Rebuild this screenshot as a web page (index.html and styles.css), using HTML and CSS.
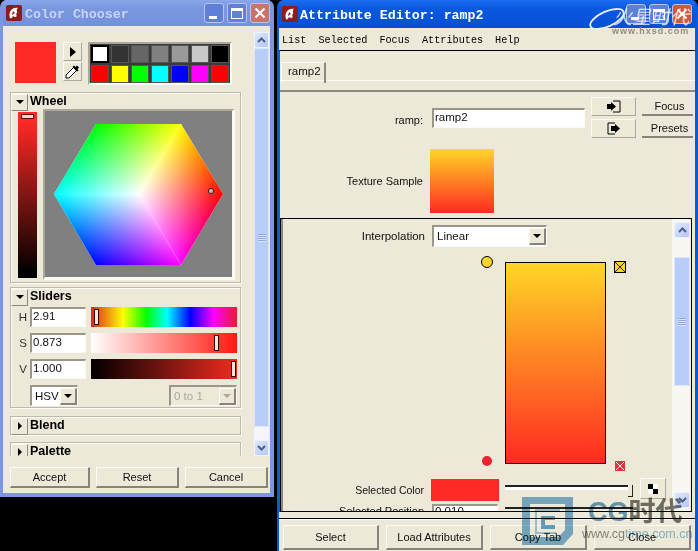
FILE: index.html
```html
<!DOCTYPE html>
<html lang="en">
<head>
  <meta charset="UTF-8" />
  <title>Color Chooser and Attribute Editor</title>
  <link rel="stylesheet" href="styles.css">
</head>
<body>

<svg class="defs" width="0" height="0">
  <defs>
    <linearGradient id="r1" gradientUnits="userSpaceOnUse" x1="94" y1="83" x2="156" y2="120"><stop offset="0" stop-color="#fff"/><stop offset="1" stop-color="#f0f"/></linearGradient>
    <linearGradient id="r2" gradientUnits="userSpaceOnUse" x1="94" y1="83" x2="156" y2="46.5"><stop offset="0" stop-color="#fff"/><stop offset="1" stop-color="#ff0"/></linearGradient>
    <linearGradient id="g1" gradientUnits="userSpaceOnUse" x1="94" y1="83" x2="31.6" y2="45.6"><stop offset="0" stop-color="#fff"/><stop offset="1" stop-color="#0ff"/></linearGradient>
    <linearGradient id="g2" gradientUnits="userSpaceOnUse" x1="94" y1="83" x2="94" y2="13"><stop offset="0" stop-color="#fff"/><stop offset="1" stop-color="#ff0"/></linearGradient>
    <linearGradient id="b1" gradientUnits="userSpaceOnUse" x1="94" y1="83" x2="31" y2="120"><stop offset="0" stop-color="#fff"/><stop offset="1" stop-color="#0ff"/></linearGradient>
    <linearGradient id="b2" gradientUnits="userSpaceOnUse" x1="94" y1="83" x2="94" y2="154"><stop offset="0" stop-color="#fff"/><stop offset="1" stop-color="#f0f"/></linearGradient>
  </defs>
</svg>

<!-- color chooser window -->
<div class="window chooser">
  <div class="titlebar">
    <svg class="app-icon" viewBox="0 0 16 16"><rect width="16" height="16" rx="2" fill="#8c1c20"/><path d="M4 13 C2 7 6 2 12 3 C9 5 13 7 10 9 C12 12 9 13 7 11 C6 13 5 14 4 13Z" fill="#fff"/><path d="M7 6 L9 8 L6 10Z" fill="#8c1c20"/></svg>
    <span class="title-text">Color Chooser</span>
    <div class="title-btns">
      <span class="tbtn"><i class="glyph-min"></i></span>
      <span class="tbtn"><i class="glyph-max"></i></span>
      <span class="tbtn tbtn-close"><svg width="12" height="12" viewBox="0 0 12 12"><path d="M1.5 1.5 L10.5 10.5 M10.5 1.5 L1.5 10.5" stroke="#fff" stroke-width="2"/></svg></span>
    </div>
  </div>
  <div class="client">
    <div class="chooser-main">
      <div class="chooser-panel">
        <div class="picker-top">
          <div class="current-color"></div>
          <div class="picker-tools">
            <span class="raised tool"><i class="arrow-right"></i></span>
            <span class="raised tool">
              <svg width="15" height="15" viewBox="0 0 15 15"><path d="M8.5 3.5 L11.5 6.5 L4 14 L1 14 L1 11Z" fill="#fff" stroke="#000"/><path d="M9 1.5 L10.5 3 L12 1.5 L14 3.5 L12.5 5 L13.5 6.5 L12 7.5 L7.5 3Z" fill="#000"/></svg>
            </span>
          </div>
          <div class="swatches">
            <i class="sw sw-on" style="background:#fff"></i>
            <i class="sw" style="background:#333"></i>
            <i class="sw" style="background:#666"></i>
            <i class="sw" style="background:#808080"></i>
            <i class="sw" style="background:#999"></i>
            <i class="sw" style="background:#c8c8c8"></i>
            <i class="sw" style="background:#000"></i>
            <i class="sw" style="background:#f00"></i>
            <i class="sw" style="background:#ff0"></i>
            <i class="sw" style="background:#0f0"></i>
            <i class="sw" style="background:#0ff"></i>
            <i class="sw" style="background:#00f"></i>
            <i class="sw" style="background:#f0f"></i>
            <i class="sw" style="background:#f00"></i>
          </div>
        </div>

        <div class="frame frame-wheel">
          <div class="frame-head"><span class="raised fold"><i class="arrow-down"></i></span><b>Wheel</b></div>
          <div class="wheel-body">
            <div class="value-bar"><i class="value-handle"></i></div>
            <svg class="wheel" width="187" height="166" viewBox="0 0 187 166">
              <rect width="187" height="166" fill="#808080"/>
              <g class="cube">
                <polygon points="94,83 136,13 178,83 136,154" fill="url(#r1)"/>
                <polygon class="times" points="94,83 136,13 178,83 136,154" fill="url(#r2)"/>
                <polygon points="94,83 136,13 51,13 9,83" fill="url(#g1)"/>
                <polygon class="times" points="94,83 136,13 51,13 9,83" fill="url(#g2)"/>
                <polygon points="94,83 9,83 51,154 136,154" fill="url(#b1)"/>
                <polygon class="times" points="94,83 9,83 51,154 136,154" fill="url(#b2)"/>
              </g>
              <circle cx="166" cy="80" r="2.6" fill="#f4a0a0" stroke="#222"/>
            </svg>
          </div>
        </div>

        <div class="frame frame-sliders">
          <div class="frame-head"><span class="raised fold"><i class="arrow-down"></i></span><b>Sliders</b></div>
          <div class="slider-row">
            <label>H</label><span class="sunk field">2.91</span>
            <div class="slider slider-h"><i class="knob knob-h"></i></div>
          </div>
          <div class="slider-row">
            <label>S</label><span class="sunk field">0.873</span>
            <div class="slider slider-s"><i class="knob knob-s"></i></div>
          </div>
          <div class="slider-row">
            <label>V</label><span class="sunk field">1.000</span>
            <div class="slider slider-v"><i class="knob knob-v"></i></div>
          </div>
          <div class="mode-row">
            <div class="sunk combo combo-mode"><span>HSV</span><i class="raised combo-btn"><i class="arrow-down"></i></i></div>
            <div class="sunk combo combo-range"><span>0 to 1</span><i class="raised combo-btn"><i class="arrow-down arrow-off"></i></i></div>
          </div>
        </div>

        <div class="frame frame-fold">
          <div class="frame-head"><span class="raised fold"><i class="arrow-right small"></i></span><b>Blend</b></div>
        </div>
        <div class="frame frame-fold frame-last">
          <div class="frame-head"><span class="raised fold"><i class="arrow-right small"></i></span><b>Palette</b></div>
        </div>
      </div>

      <div class="scrollbar scroll-left">
        <span class="sb-btn"><svg width="9" height="6" viewBox="0 0 9 6"><path d="M1 5 L4.5 1.5 L8 5" fill="none" stroke="#4d6185" stroke-width="2"/></svg></span>
        <div class="sb-track"><div class="sb-thumb thumb-left"><i class="grip"></i></div></div>
        <span class="sb-btn"><svg width="9" height="6" viewBox="0 0 9 6"><path d="M1 1 L4.5 4.5 L8 1" fill="none" stroke="#4d6185" stroke-width="2"/></svg></span>
      </div>
    </div>

    <div class="chooser-foot">
      <button class="raised btn btn-accept">Accept</button>
      <button class="raised btn btn-reset">Reset</button>
      <button class="raised btn btn-cancel">Cancel</button>
    </div>
  </div>
</div>

<!-- attribute editor window -->
<div class="window editor">
  <div class="titlebar">
    <svg class="app-icon" viewBox="0 0 16 16"><rect width="16" height="16" rx="2" fill="#8c1c20"/><path d="M4 13 C2 7 6 2 12 3 C9 5 13 7 10 9 C12 12 9 13 7 11 C6 13 5 14 4 13Z" fill="#fff"/><path d="M7 6 L9 8 L6 10Z" fill="#8c1c20"/></svg>
    <span class="title-text">Attribute Editor: ramp2</span>
    <div class="title-btns">
      <span class="tbtn"><i class="glyph-min"></i></span>
      <span class="tbtn"><i class="glyph-max"></i></span>
      <span class="tbtn tbtn-close"><svg width="12" height="12" viewBox="0 0 12 12"><path d="M1.5 1.5 L10.5 10.5 M10.5 1.5 L1.5 10.5" stroke="#fff" stroke-width="2"/></svg></span>
    </div>
  </div>
  <div class="client">
    <div class="menubar">
      <span>List</span><span>Selected</span><span>Focus</span><span>Attributes</span><span>Help</span>
    </div>
    <div class="editor-body">
      <div class="tabstrip"><span class="tab">ramp2</span></div>
      <div class="node-row">
        <label class="row-label">ramp:</label>
        <span class="sunk field node-name">ramp2</span>
        <div class="node-btns">
          <span class="raised-flat icon-btn"><svg width="15" height="13" viewBox="0 0 15 13"><path d="M7 1 H14 V12 H7" fill="none" stroke="#000"/><path d="M1 4 H5 V2 L10 6.5 L5 11 V9 H1Z" fill="#000"/></svg></span>
          <span class="raised side-btn">Focus</span>
          <span class="raised-flat icon-btn"><svg width="15" height="13" viewBox="0 0 15 13"><path d="M9 1 H2 V12 H9" fill="none" stroke="#000"/><path d="M5 4 H9 V2 L14 6.5 L9 11 V9 H5Z" fill="#000"/></svg></span>
          <span class="raised side-btn">Presets</span>
        </div>
      </div>
      <div class="sample-row">
        <label class="row-label">Texture Sample</label>
        <div class="sample"></div>
      </div>

      <div class="scroll-frame">
        <div class="scroll-content">
          <div class="interp-row">
            <label class="row-label">Interpolation</label>
            <div class="sunk combo combo-interp"><span>Linear</span><i class="raised combo-btn"><i class="arrow-down"></i></i></div>
          </div>
          <div class="ramp-row">
            <div class="ramp-dots">
              <i class="dot dot-top"></i>
              <i class="dot dot-bottom"></i>
            </div>
            <div class="ramp"></div>
            <div class="ramp-marks">
              <i class="mark mark-top"></i>
              <i class="mark mark-bottom"></i>
            </div>
          </div>
          <div class="color-row">
            <label class="row-label">Selected Color</label>
            <div class="selected-color"></div>
            <div class="color-slider"><i></i></div>
            <span class="raised-flat checker-btn"><i class="checker"></i></span>
          </div>
          <div class="position-row">
            <label class="row-label">Selected Position</label>
            <span class="sunk field pos-field">0.010</span>
            <div class="pos-slider"></div>
          </div>
        </div>
        <div class="scrollbar scroll-right">
          <span class="sb-btn"><svg width="9" height="6" viewBox="0 0 9 6"><path d="M1 5 L4.5 1.5 L8 5" fill="none" stroke="#4d6185" stroke-width="2"/></svg></span>
          <div class="sb-track"><div class="sb-thumb thumb-right"><i class="grip"></i></div></div>
          <span class="sb-btn"><svg width="9" height="6" viewBox="0 0 9 6"><path d="M1 1 L4.5 4.5 L8 1" fill="none" stroke="#4d6185" stroke-width="2"/></svg></span>
        </div>
      </div>
    </div>
    <div class="editor-foot">
      <button class="raised btn">Select</button>
      <button class="raised btn">Load Attributes</button>
      <button class="raised btn">Copy Tab</button>
      <button class="raised btn">Close</button>
    </div>
  </div>
</div>

<!-- watermarks over the screenshot -->
<div class="mark-hxsd">
  <svg class="swoosh" width="40" height="26" viewBox="0 0 40 26"><ellipse cx="20" cy="13" rx="18" ry="7.5" transform="rotate(-24 20 13)" fill="none" stroke="#e8eefa" stroke-width="1.8"/></svg>
  <span class="hxsd-cn">火星时代</span>
  <span class="hxsd-url">www.hxsd.com</span>
</div>
<div class="mark-cg">
  <svg class="cg-logo" width="52" height="50" viewBox="0 0 52 50">
    <path fill-rule="evenodd" d="M0 0 H51 V37 L41 48 H0Z M8 7 V40 H36 L43 33 V7Z" fill="#7cb4dc"/>
    <path d="M13 12 H38 V14 H15 V35 H34 V37 H13Z" fill="#a8cde6"/>
    <path d="M19 19 H33 V23 H23 V28 H33 V32 H19Z" fill="#6aa6d6"/>
  </svg>
  <div class="cg-text">
    <span class="cg-name"><span class="cg-latin">CG</span><span class="cg-cn">时代</span></span>
    <span class="cg-url"><span class="url-grey">www.cg</span><span class="url-blue">time.com.cn</span></span>
  </div>
</div>

</body>
</html>
```

FILE: styles.css
```css
* { box-sizing: border-box; }
html, body {
  margin: 0;
  height: 551px;
  overflow: hidden;
}
body {
  position: relative;
  width: 698px;
  background: #000;
  font-family: 'Liberation Sans', sans-serif;
  font-size: 11px;
  color: #111;
}
.defs { position: absolute; }
i { display: block; font-style: normal; }

/* windows */
.window {
  position: absolute;
  top: 0;
  display: flex;
  flex-direction: column;
  border-radius: 7px 7px 0 0;
  overflow: hidden;
}
.chooser {
  left: 0;
  width: 274px;
  height: 497px;
  background: #7b97e0;
  padding: 0 4px 4px 3px;
}
.editor {
  left: 277px;
  width: 421px;
  height: 551px;
  background: #0a58e0;
  padding: 0 3px 0 2px;
}
.titlebar {
  display: flex;
  align-items: center;
  height: 26px;
  flex: none;
  background: linear-gradient(#8aa6ea, #7b97e0 30%, #7591dc);
}
.editor .titlebar {
  height: 28px;
  background: linear-gradient(#1c6cf0, #0a58e0 30%, #0650d4);
}
.app-icon { width: 16px; height: 16px; margin-left: 3px; flex: none; }
.title-text {
  margin: 2px 0 0 3px;
  font-family: 'Liberation Mono', monospace;
  font-size: 13.3px;
  font-weight: bold;
  color: #c6d3f2;
}
.editor .title-text { color: #fff; margin-left: 2px; }
.title-btns { display: flex; gap: 3px; margin-left: auto; }
.editor .title-btns { margin-right: 3px; }
.tbtn {
  width: 20px;
  height: 20px;
  border: 1px solid #b6c6ee;
  border-radius: 3px;
  background: #5f80d8;
  display: flex;
  align-items: center;
  justify-content: center;
}
.tbtn-close { background: #c8746c; }
.editor .tbtn-close { background: #d0583c; }
.glyph-min { width: 8px; height: 3px; background: #fff; margin-top: 9px; margin-right: 2px; }
.glyph-max { width: 12px; height: 11px; border: 1px solid #fff; border-top-width: 3px; }
.client {
  background: #ece9d8;
  flex: 1;
  display: flex;
  flex-direction: column;
  min-height: 0;
}

/* bevels */
.raised {
  background: #ece9d8;
  border: 2px solid;
  border-color: #fbfaf4 #85837a #85837a #fbfaf4;
  border-width: 1px 2px 2px 1px;
}
.raised-flat {
  background: #ece9d8;
  border: 1px solid;
  border-color: #fbfaf4 #aca899 #aca899 #fbfaf4;
}
.sunk {
  background: #fff;
  border: 2px solid;
  border-color: #9a9788 #fbfaf4 #fbfaf4 #9a9788;
  border-width: 2px 1px 1px 2px;
}
.field {
  display: block;
  height: 20px;
  font-size: 11.5px;
  line-height: 15px;
  padding-left: 1px;
}

/* arrows */
.arrow-right {
  width: 0;
  height: 0;
  border-left: 6px solid #000;
  border-top: 5px solid transparent;
  border-bottom: 5px solid transparent;
}
.arrow-right.small { border-left-width: 4px; border-top-width: 4px; border-bottom-width: 4px; }
.arrow-down {
  width: 0;
  height: 0;
  border-top: 4px solid #000;
  border-left: 4px solid transparent;
  border-right: 4px solid transparent;
}
.arrow-off { border-top-color: #aca899; }

/* chooser */
.chooser-main { display: flex; height: 430px; flex: none; }
.chooser-panel { width: 251px; height: 430px; overflow: hidden; padding-left: 7px; flex: none; }
.picker-top { display: flex; padding: 16px 0 0 5px; height: 66px; }
.current-color { width: 41px; height: 41px; background: #ff2a24; }
.picker-tools { display: flex; flex-direction: column; width: 19px; margin-left: 7px; gap: 1px; }
.tool {
  height: 19px;
  display: flex;
  align-items: center;
  justify-content: center;
  border-width: 1px;
  border-color: #fbfaf4 #aca899 #aca899 #fbfaf4;
}
.swatches {
  margin-left: 6px;
  width: 144px;
  height: 43px;
  background: #3a3a36;
  border: 2px solid #aca899;
  border-right-color: #fbfaf4;
  border-bottom-color: #fbfaf4;
  display: grid;
  grid-template-columns: repeat(7, 18px);
  grid-auto-rows: 18px;
  gap: 2px;
  padding: 1px;
}
.sw { border: 1px solid #555; }
.sw-on { border: 2px solid #000; }

.frame {
  width: 231px;
  border: 1px solid #bdbaa8;
  box-shadow: inset 1px 1px 0 #fbfaf4, 1px 1px 0 #fbfaf4;
}
.frame-head { display: flex; align-items: center; height: 18px; }
.frame-head b { font-size: 12.5px; margin: -2px 0 0 2px; color: #000; }
.fold {
  width: 17px;
  height: 17px;
  display: flex;
  align-items: center;
  justify-content: center;
  border-width: 1px;
  border-color: #fbfaf4 #8c8a7c #8c8a7c #fbfaf4;
}
.frame-wheel { height: 191px; }
.wheel-body { display: flex; align-items: flex-start; padding-left: 7px; }
.value-bar {
  width: 19px;
  height: 166px;
  margin-top: 1px;
  background: linear-gradient(#ff2a24 5%, #000 97%);
  padding: 2px 3px;
}
.value-handle { height: 5px; background: #f4d8d0; border: 1px solid #5a1010; }
.wheel {
  display: block;
  margin: -2px 0 0 6px;
  box-sizing: content-box;
  border-top: 2px solid #aca899;
  border-left: 2px solid #aca899;
  border-right: 3px solid #fbfaf4;
  border-bottom: 3px solid #fbfaf4;
}
.cube { isolation: isolate; }
.times { mix-blend-mode: multiply; }
.frame-sliders { height: 121px; margin-top: 4px; }
.slider-row { display: flex; align-items: center; height: 20px; margin-bottom: 6px; }
.frame-head + .slider-row { margin-top: 1px; }
.slider-row label { width: 19px; text-align: right; padding-right: 3px; font-size: 11.5px; color: #333; }
.slider-row .field { width: 56px; }
.slider { position: relative; width: 146px; height: 20px; margin-left: 5px; }
.slider-h { background: linear-gradient(90deg, #e02020, #ff0 22%, #0f0 38%, #0ff 52%, #00f 68%, #f0f 84%, #e81c30); }
.slider-s { background: linear-gradient(90deg, #fff, #ff1a10); }
.slider-v { background: linear-gradient(90deg, #000, #f02a20); }
.knob {
  position: absolute;
  top: 2px;
  width: 5px;
  height: 16px;
  background: #f0e8e0;
  border: 1px solid #300;
}
.knob-h { left: 3px; }
.knob-s { left: 123px; }
.knob-v { left: 140px; }
.mode-row { display: flex; justify-content: space-between; padding: 0 3px 0 19px; }
.combo {
  height: 21px;
  display: flex;
  align-items: center;
  justify-content: space-between;
  font-size: 11.5px;
  padding-left: 3px;
}
.combo-btn {
  width: 17px;
  height: 17px;
  display: flex;
  align-items: center;
  justify-content: center;
  flex: none;
}
.combo-mode { width: 48px; }
.combo-range {
  width: 68px;
  color: #aca899;
  background: #ece9d8;
}
.frame-fold { height: 19px; margin-top: 8px; }
.frame-last { margin-top: 7px; }

/* scrollbars */
.scrollbar {
  width: 15px;
  flex: none;
  display: flex;
  flex-direction: column;
  background: #f6f5fb;
  margin-top: 6px;
}
.sb-btn {
  height: 16px;
  flex: none;
  display: flex;
  align-items: center;
  justify-content: center;
  background: linear-gradient(135deg, #dfe8fd, #b4c8f6);
  border: 1px solid #eef2fd;
  border-radius: 2px;
}
.sb-track { flex: 1; position: relative; }
.sb-thumb {
  position: absolute;
  left: 0;
  right: 0;
  background: #b9cdf9;
  border: 1px solid #dce6fd;
  display: flex;
  align-items: center;
  justify-content: center;
}
.thumb-left { top: 0; height: 379px; }
.thumb-right { top: 19px; height: 129px; }
.grip {
  width: 7px;
  height: 8px;
  background: repeating-linear-gradient(#8ea6d8 0 1px, #dce6fd 1px 2px);
}
.chooser-foot { display: flex; padding: 11px 0 0 7px; gap: 6px; }
.btn {
  height: 21px;
  padding: 0;
  font-family: inherit;
  font-size: 11px;
  color: #111;
}
.btn-accept { width: 80px; }
.btn-reset { width: 83px; }
.btn-cancel { width: 83px; }

/* attribute editor */
.menubar {
  height: 22px;
  flex: none;
  display: flex;
  align-items: center;
  gap: 12px;
  padding: 3px 0 0 3px;
  font-family: 'Liberation Mono', monospace;
  font-size: 10.2px;
  color: #000;
}
.editor-body {
  border-top: 1px solid #000;
  border-left: 1px solid #555;
  height: 462px;
  flex: none;
}
.tabstrip {
  height: 41px;
  padding: 11px 0 0 1px;
  border-bottom: 2px solid #8c8a7c;
  box-shadow: inset 0 -9px 0 #ece9d8, inset 0 -10px 0 #fbfaf4;
}
.tab {
  display: block;
  width: 45px;
  height: 21px;
  border-right: 2px solid #8c8a7c;
  border-top: 1px solid #fbfaf4;
  border-left: 1px solid #fbfaf4;
  font-size: 11.5px;
  line-height: 17px;
  padding-left: 6px;
}
.row-label { width: 144px; text-align: right; font-size: 11px; flex: none; }
.node-row {
  display: flex;
  align-items: flex-start;
  padding-top: 5px;
  height: 57px;
}
.node-row .row-label { width: 143px; line-height: 46px; }
.node-name { width: 153px; margin: 11px 0 0 9px; }
.node-btns {
  display: grid;
  grid-template-columns: 45px 51px;
  grid-auto-rows: 19px;
  gap: 3px 6px;
  margin-left: 6px;
}
.icon-btn { display: flex; align-items: center; justify-content: center; }
.side-btn {
  font-size: 11px;
  text-align: center;
  line-height: 19px;
  border-right: none;
  border-top: none;
  border-left: none;
  padding-left: 4px;
}
.sample-row { display: flex; align-items: center; height: 64px; }
.sample-row .row-label { width: 143px; }
.sample {
  width: 64px;
  height: 64px;
  margin-left: 7px;
  background: linear-gradient(#ffd627, #ff2a20);
}
.scroll-frame {
  margin-top: 5px;
  height: 294px;
  width: 412px;
  border: 1px solid #000;
  display: flex;
  overflow: hidden;
  box-shadow: inset 2px 0 0 #8c8a7c;
}
.scroll-content { width: 391px; height: 292px; flex: none; padding-top: 5px; overflow: hidden; }
.interp-row { display: flex; align-items: center; height: 23px; }
.interp-row .row-label { font-size: 11.5px; }
.combo-interp { width: 115px; margin-left: 7px; height: 22px; }
.ramp-row { display: flex; align-items: flex-start; height: 226px; margin-top: 6px; padding-left: 200px; }
.ramp-dots {
  width: 13px;
  height: 213px;
  display: flex;
  flex-direction: column;
  justify-content: space-between;
  padding-top: 3px;
}
.dot { width: 12px; height: 12px; border-radius: 50%; }
.dot-top { background: #ffd627; border: 1px solid #000; }
.dot-bottom { background: #e8242c; width: 10px; height: 10px; margin-left: 1px; }
.ramp {
  width: 101px;
  height: 202px;
  margin: 9px 0 0 11px;
  background: linear-gradient(#ffd627, #ff2a20);
  border: 1px solid #000;
}
.ramp-marks {
  width: 12px;
  height: 218px;
  margin-left: 8px;
  display: flex;
  flex-direction: column;
  justify-content: space-between;
  padding-top: 8px;
}
.mark {
  width: 12px;
  height: 12px;
  background:
    linear-gradient(45deg, transparent 46%, #222 46% 54%, transparent 54%),
    linear-gradient(-45deg, transparent 46%, #222 46% 54%, transparent 54%),
    #ffd627;
  border: 1px solid #000;
}
.mark-bottom {
  width: 10px;
  height: 10px;
  margin-left: 1px;
  background:
    linear-gradient(45deg, transparent 44%, #fff 44% 56%, transparent 56%),
    linear-gradient(-45deg, transparent 44%, #fff 44% 56%, transparent 56%),
    #e03238;
  border-color: #e03238;
}
.color-row { display: flex; align-items: flex-start; height: 25px; }
.color-row .row-label { width: 143px; line-height: 22px; font-size: 10.5px; }
.selected-color { width: 68px; height: 22px; margin-left: 7px; background: #ff2a24; }
.color-slider {
  width: 128px;
  height: 5px;
  margin: 6px 0 0 6px;
  background: #fff;
  border-top: 2px solid #222;
  position: relative;
}
.color-slider i {
  position: absolute;
  right: 0;
  top: -2px;
  width: 5px;
  height: 12px;
  background: #ece9d8;
  border-right: 1px solid #222;
  border-bottom: 1px solid #222;
}
.checker-btn {
  width: 26px;
  height: 21px;
  margin: -1px 0 0 7px;
  display: flex;
  align-items: center;
  justify-content: center;
}
.checker {
  width: 10px;
  height: 10px;
  background: conic-gradient(#fff 0 25%, #000 0 50%, #fff 0 75%, #000 0);
}
.position-row { display: flex; align-items: flex-start; }
.position-row .row-label { width: 143px; line-height: 15px; }
.pos-field { width: 66px; margin-left: 8px; line-height: 11px; }
.pos-slider { width: 128px; height: 2px; margin: 3px 0 0 7px; background: #222; }
.scroll-right {
  margin: 0;
  padding: 3px 0 3px 2px;
  height: 292px;
  width: 18px;
  background: #f8f7f2;
}
.scroll-right .sb-track { background: #f8f7f2; }
.editor-foot {
  display: flex;
  gap: 7px;
  margin-top: 6px;
  padding: 6px 0 0 4px;
  border-top: 1px solid #000;
  box-shadow: inset 0 1px 0 #fbfaf4;
}
.editor-foot .btn { width: 97px; height: 25px; }
.editor-foot .btn:nth-child(1) { width: 96px; }

/* watermarks */
.mark-hxsd {
  position: absolute;
  left: 587px;
  top: 6px;
  width: 110px;
  height: 30px;
  color: #fff;
}
.swoosh { position: absolute; left: 0; top: 0; }
.hxsd-cn {
  position: absolute;
  left: 26px;
  top: 0;
  font-family: 'Noto Sans CJK SC', sans-serif;
  font-size: 19px;
  font-style: italic;
  line-height: 20px;
  opacity: .75;
}
.hxsd-url {
  position: absolute;
  left: 25px;
  top: 20px;
  font-size: 9px;
  line-height: 10px;
  font-weight: bold;
  letter-spacing: 1px;
  color: #8e8e88;
}
.mark-cg {
  position: absolute;
  left: 522px;
  top: 497px;
  display: flex;
  mix-blend-mode: multiply;
}
.cg-logo { flex: none; }
.cg-text { display: flex; flex-direction: column; margin-left: 8px; }
.cg-name {
  font-family: 'Liberation Sans', 'Noto Sans CJK SC', sans-serif;
  font-size: 27px;
  font-weight: bold;
  line-height: 30px;
  margin-left: 6px;
  white-space: nowrap;
}
.cg-latin { color: #6ea0c4; }
.cg-cn { color: #77766f; }
.cg-url {
  font-size: 12.5px;
  line-height: 14px;
  white-space: nowrap;
}
.url-grey { color: #8f8f88; }
.url-blue { color: #8fbedc; }
```
